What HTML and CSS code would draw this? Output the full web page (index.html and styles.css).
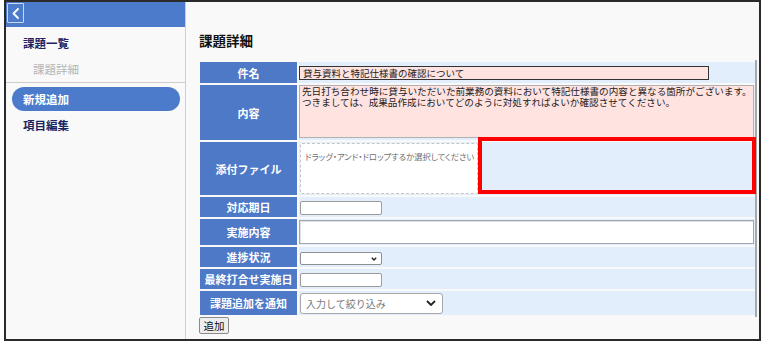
FILE: index.html
```html
<!DOCTYPE html>
<html lang="ja">
<head>
<meta charset="UTF-8">
<meta name="viewport" content="width=device-width, initial-scale=1.0">
<title>課題詳細</title>
<link rel="stylesheet" href="styles.css">
</head>
<body>
<div class="frame">
  <div class="sidebar">
    <div class="side-head">
      <button class="back-btn" title="戻る">
        <svg width="15" height="18" viewBox="0 0 15 18"><polyline points="10,5 5.5,9.5 10,14" fill="none" stroke="#fff" stroke-width="1.8" stroke-linecap="round" stroke-linejoin="round"/></svg>
      </button>
    </div>
    <ul class="menu menu-top">
      <li class="menu-item">課題一覧</li>
      <li class="menu-item sub">課題詳細</li>
    </ul>
    <ul class="menu menu-lower">
      <li class="menu-item active">新規追加</li>
      <li class="menu-item">項目編集</li>
    </ul>
  </div>

  <div class="main">
    <h2 class="page-title">課題詳細</h2>

    <div class="form-grid">
      <div class="label">件名</div>
      <div class="value">
        <input class="field subject" type="text" value="貸与資料と特記仕様書の確認について">
      </div>

      <div class="label">内容</div>
      <div class="value top">
        <div class="field content-text">
          <div class="line">先日打ち合わせ時に貸与いただいた前業務の資料において特記仕様書の内容と異なる箇所がございます。</div>
          <div class="line">つきましては、成果品作成においてどのように対処すればよいか確認させてください。</div>
        </div>
      </div>

      <div class="label">添付ファイル</div>
      <div class="value attach">
        <div class="dropzone">ドラッグ・アンド・ドロップするか選択してください</div>
        <div class="mark"></div>
      </div>

      <div class="label">対応期日</div>
      <div class="value">
        <input class="field small-input" type="text">
      </div>

      <div class="label">実施内容</div>
      <div class="value">
        <input class="field wide-input" type="text">
      </div>

      <div class="label">進捗状況</div>
      <div class="value">
        <div class="select small-select">
          <svg width="6" height="4" viewBox="0 0 6 4"><polyline points="0.8,0.8 3,3 5.2,0.8" fill="none" stroke="#222" stroke-width="1.4"/></svg>
        </div>
      </div>

      <div class="label">最終打合せ実施日</div>
      <div class="value">
        <input class="field small-input" type="text">
      </div>

      <div class="label">課題追加を通知</div>
      <div class="value">
        <div class="select notify-select">
          <span class="placeholder">入力して絞り込み</span>
          <svg width="10" height="6" viewBox="0 0 10 6"><polyline points="1,1 5,5 9,1" fill="none" stroke="#222" stroke-width="1.8"/></svg>
        </div>
      </div>
    </div>

    <button class="add-btn">追加</button>
  </div>
</div>
</body>
</html>
```

FILE: styles.css
```css
body {
  margin: 0;
  background-color: #fff;
  font-family: "Noto Sans CJK JP", "Liberation Sans", sans-serif;
}
.frame {
  display: flex;
  box-sizing: border-box;
  margin-left: 4px;
  width: 757px;
  height: 341px;
  border: 2px solid #2a2a2a;
  background-color: #f9f9f9;
}

/* sidebar */
.sidebar {
  box-sizing: border-box;
  width: 180px;
  border-right: 1px solid #cfcfcf;
}
.side-head {
  box-sizing: border-box;
  height: 25px;
  padding: 1px 0 0 1px;
  background-color: #4b7bca;
}
.back-btn {
  display: block;
  box-sizing: border-box;
  width: 17px;
  height: 20px;
  padding: 0;
  border: 1px solid rgba(255, 255, 255, 0.7);
  border-radius: 1px;
  background: transparent;
}
.back-btn svg {
  display: block;
}
.menu {
  list-style: none;
  margin: 0;
  padding: 0;
}
.menu-top {
  padding-top: 3px;
  border-bottom: 1px solid #cdcdcd;
}
.menu-lower {
  padding-top: 4px;
}
.menu-item {
  height: 26px;
  line-height: 26px;
  padding-left: 17px;
  font-size: 11.5px;
  font-weight: bold;
  color: #1b2463;
}
.menu-item.sub {
  padding-left: 27px;
  font-weight: normal;
  color: #b5b5b5;
}
.menu-item.active {
  height: 24px;
  line-height: 24px;
  margin: 0 5px 1px 6px;
  padding-left: 11px;
  border-radius: 12px;
  background-color: #4b7bca;
  color: #fff;
}

/* main */
.main {
  flex: 1;
  padding: 28px 0 0 13px;
}
.page-title {
  margin: 0 0 10px;
  font-size: 13.5px;
  line-height: 20px;
  font-weight: bold;
  color: #111;
}
.form-grid {
  display: grid;
  box-sizing: border-box;
  width: 557px;
  margin-left: 1px;
  padding: 2px 0;
  grid-template-columns: 97px 1fr;
  grid-template-rows: 21px 55px 53px 20px 26px 20px 20px 24px;
  gap: 2px;
  border-right: 2px solid #a9a9a9;
}
.label {
  display: flex;
  align-items: center;
  justify-content: center;
  background-color: #4d79c6;
  color: #fff;
  font-size: 11px;
  font-weight: bold;
}
.value {
  display: flex;
  align-items: center;
  background-color: #e3eefc;
}
.value.top {
  align-items: flex-start;
}
.value.attach {
  position: relative;
}

.field {
  box-sizing: border-box;
  margin: 0;
  padding: 0 3px;
  font-family: inherit;
  font-size: 9.5px;
  color: #222;
  outline: none;
}
.subject {
  width: 410px;
  height: 14px;
  border: 1px solid #333;
  background-color: #ffe3e1;
}
.content-text {
  width: 455px;
  height: 53px;
  padding: 0 2px;
  border: 1px solid #b0b0b0;
  background-color: #ffe3e1;
  font-size: 9.6px;
  white-space: nowrap;
  overflow: hidden;
}
.content-text .line {
  height: 11px;
  line-height: 11px;
}
.dropzone {
  box-sizing: border-box;
  width: 178px;
  height: 51px;
  margin-left: 1px;
  padding: 6px 4px 0;
  border: 1px dashed #c6c6c6;
  border-radius: 2px;
  background-color: #fff;
  font-size: 8.3px;
  line-height: 12px;
  color: #707070;
  font-feature-settings: "palt";
  white-space: nowrap;
  overflow: hidden;
}
/* red highlight drawn over the cell */
.mark {
  position: absolute;
  left: 179px;
  top: -5px;
  box-sizing: border-box;
  width: 278px;
  height: 57px;
  border: 4px solid #f00;
}
.small-input {
  width: 82px;
  height: 14px;
  margin: 2px 0 0 1px;
  border: 1px solid #9a9a9a;
  border-radius: 2px;
  background-color: #fff;
}
.wide-input {
  width: 455px;
  height: 24px;
  border: 1px solid #a0a7ae;
  box-shadow: inset 1px 1px 0 #dde1e5;
  background-color: #fff;
}
.select {
  display: flex;
  align-items: center;
  justify-content: space-between;
  box-sizing: border-box;
  background-color: #fff;
}
.small-select {
  justify-content: flex-end;
  width: 82px;
  height: 13px;
  margin: 3px 0 0 1px;
  padding-right: 4px;
  border: 1px solid #8f8f8f;
  border-radius: 2px;
}
.notify-select {
  width: 143px;
  height: 21px;
  margin-left: 1px;
  padding: 0 6px 0 5px;
  border: 1px solid #a8a8a8;
  border-radius: 3px;
}
.placeholder {
  font-size: 10px;
  color: #777;
}
.select svg {
  display: block;
}
.add-btn {
  display: block;
  box-sizing: border-box;
  width: 30px;
  height: 17px;
  padding: 0;
  border: 1px solid #8a8a8a;
  border-radius: 2px;
  background-color: #eeeeee;
  font-family: inherit;
  font-size: 10.5px;
  line-height: 15px;
  color: #111;
}
```
